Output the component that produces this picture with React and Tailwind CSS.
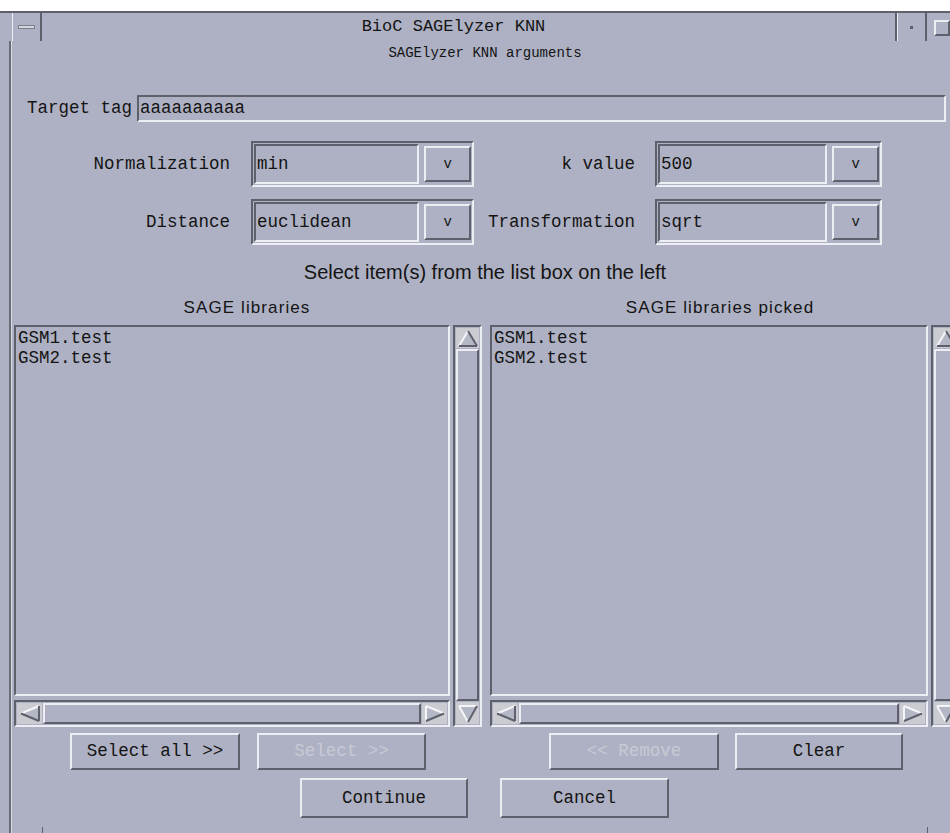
import React from "react";

const MONO = { fontFamily: '"Liberation Mono", "DejaVu Sans Mono", monospace' };
const SANS = { fontFamily: '"Liberation Sans", Arial, sans-serif' };

const raised =
  "border-2 border-t-[#eceef3] border-l-[#eceef3] border-r-[#5e616c] border-b-[#5e616c]";
const sunken =
  "border-2 border-t-[#5e616c] border-l-[#5e616c] border-r-[#eceef3] border-b-[#eceef3]";

function Arrow({ dir }) {
  const L = "#f4f5f8";
  const D = "#5e616c";
  const F = "#b4b7c6";
  if (dir === "up") {
    return (
      <svg width="22" height="19" viewBox="0 0 22 19" className="block">
        <polygon points="11,2 2,17 20,17" fill={F} />
        <line x1="11" y1="2" x2="2" y2="17" stroke={L} strokeWidth="2" />
        <line x1="11" y1="2" x2="20" y2="17" stroke={D} strokeWidth="2" />
        <line x1="2" y1="17" x2="20" y2="17" stroke={D} strokeWidth="2" />
      </svg>
    );
  }
  if (dir === "down") {
    return (
      <svg width="22" height="21" viewBox="0 0 22 21" className="block">
        <polygon points="2,3 20,3 11,19" fill={F} />
        <line x1="2" y1="3" x2="20" y2="3" stroke={L} strokeWidth="2" />
        <line x1="2" y1="3" x2="11" y2="19" stroke={L} strokeWidth="2" />
        <line x1="20" y1="3" x2="11" y2="19" stroke={D} strokeWidth="2" />
      </svg>
    );
  }
  if (dir === "left") {
    return (
      <svg width="24" height="21" viewBox="0 0 24 21" className="block">
        <polygon points="3,10.5 21,3 21,18" fill={F} />
        <line x1="3" y1="10.5" x2="21" y2="3" stroke={L} strokeWidth="2" />
        <line x1="3" y1="10.5" x2="21" y2="18" stroke={D} strokeWidth="2" />
        <line x1="21" y1="3" x2="21" y2="18" stroke={D} strokeWidth="2" />
      </svg>
    );
  }
  return (
    <svg width="24" height="21" viewBox="0 0 24 21" className="block">
      <polygon points="21,10.5 3,3 3,18" fill={F} />
      <line x1="3" y1="3" x2="3" y2="18" stroke={L} strokeWidth="2" />
      <line x1="3" y1="3" x2="21" y2="10.5" stroke={L} strokeWidth="2" />
      <line x1="3" y1="18" x2="21" y2="10.5" stroke={D} strokeWidth="2" />
    </svg>
  );
}

function VScroll() {
  return (
    <div className={`w-[29px] h-[402px] ${sunken} flex flex-col p-[1px] gap-[1px]`}>
      <div className="h-[20px] bg-[#cbccd1] flex items-center justify-center">
        <Arrow dir="up" />
      </div>
      <div className={`flex-1 ${raised}`} />
      <div className="h-[22px] bg-[#cbccd1] flex items-center justify-center">
        <Arrow dir="down" />
      </div>
    </div>
  );
}

function HScroll({ width }) {
  return (
    <div className={`${width} h-[27px] ${sunken} flex p-[1px] gap-[1px]`}>
      <div className="w-[25px] bg-[#cbccd1] flex items-center justify-center">
        <Arrow dir="left" />
      </div>
      <div className={`flex-1 ${raised}`} />
      <div className="w-[25px] bg-[#cbccd1] flex items-center justify-center">
        <Arrow dir="right" />
      </div>
    </div>
  );
}

function ListPanel({ items, listWidth }) {
  return (
    <div className="flex gap-[3px]">
      <div className="flex flex-col gap-[4px]">
        <div className={`${listWidth} h-[371px] ${sunken} pl-[2px] pt-[1px]`}>
          {items.map((it) => (
            <div key={it} className="h-[20px] leading-[20px] text-[17.5px]">
              {it}
            </div>
          ))}
        </div>
        <HScroll width={listWidth} />
      </div>
      <VScroll />
    </div>
  );
}

function Button({ children, width, disabled, height = "h-[37px]" }) {
  return (
    <div
      className={`${width} ${height} ${raised} flex items-center justify-center text-[17.5px] ${
        disabled ? "text-[#c7cad5]" : "text-[#141414]"
      }`}
    >
      {children}
    </div>
  );
}

function Combo({ value, width, fieldWidth }) {
  return (
    <div className={`${width} h-[46px] ${sunken} flex items-stretch p-[1px]`}>
      <div className={`${fieldWidth} ${sunken} flex items-center pl-[1px] text-[17.5px]`}>
        {value}
      </div>
      <div className={`ml-[5px] my-[2px] w-[47px] ${raised} flex items-center justify-center text-[14px]`}>
        v
      </div>
    </div>
  );
}

function FieldRow({ leftLabel, leftValue, rightLabel, rightValue, mt }) {
  return (
    <div className={`flex items-center h-[46px] ${mt}`}>
      <div className="w-[218px] text-right text-[17.5px]">{leftLabel}</div>
      <div className="ml-[21px]">
        <Combo value={leftValue} width="w-[223px]" fieldWidth="w-[167px]" />
      </div>
      <div className="w-[161px] text-right text-[17.5px]">{rightLabel}</div>
      <div className="ml-[20px]">
        <Combo value={rightValue} width="w-[227px]" fieldWidth="w-[170px]" />
      </div>
    </div>
  );
}

function TitleBar() {
  return (
    <div className="h-[30px] shrink-0 border-t-2 border-[#5e616c] flex items-stretch">
      <div className="w-[12px]" />
      <div className="w-[30px] border-l border-[#eceef3] border-r-2 border-r-[#5e616c] flex items-center pl-[5px]">
        <div className="w-[17px] h-[4px] bg-[#d5d7df] border border-[#7b7e8a]" />
      </div>
      <div className="flex-1 flex items-center justify-center pr-[30px] text-[17px]">
        BioC SAGElyzer KNN
      </div>
      <div className="w-[2px] bg-[#5e616c]" />
      <div className="w-[1px] bg-[#eceef3]" />
      <div className="w-[27px] flex items-center justify-center">
        <div className="w-[3px] h-[3px] bg-[#5e616c]" />
      </div>
      <div className="w-[2px] bg-[#5e616c]" />
      <div className="w-[7px]" />
      <div className="w-[16px] h-[16px] mt-[7px] border-2 border-t-[#eceef3] border-l-[#eceef3] border-r-[#5e616c] border-b-[#5e616c]" />
    </div>
  );
}

export default function App() {
  return (
    <div
      className="w-[950px] h-[833px] bg-[#aeb1c3] overflow-hidden flex flex-col text-[#141414] relative"
      style={MONO}
    >
      <div className="h-[11px] bg-white shrink-0" />
      <TitleBar />
      <div className="flex flex-1">
        <div className="w-[9px] shrink-0" />
        <div className="w-[2px] shrink-0 bg-[#6a6d78]" />
        <div className="w-[1px] shrink-0 bg-[#d8dae2]" />
        <div className="w-[946px] shrink-0 flex flex-col">
          <div className="h-[24px] flex items-center justify-center text-[14px]">
            SAGElyzer KNN arguments
          </div>

          <div className="mt-[30px] h-[27px] flex items-center">
            <div className="w-[125px] pl-[15px] text-[17.5px]">Target tag</div>
            <div className={`w-[809px] h-[27px] ${sunken} flex items-center pl-[1px] text-[17.5px]`}>
              aaaaaaaaaa
            </div>
          </div>

          <FieldRow
            mt="mt-[19px]"
            leftLabel="Normalization"
            leftValue="min"
            rightLabel="k value"
            rightValue="500"
          />
          <FieldRow
            mt="mt-[12px]"
            leftLabel="Distance"
            leftValue="euclidean"
            rightLabel="Transformation"
            rightValue="sqrt"
          />

          <div className="mt-[17px] h-[20px] flex items-center justify-center text-[20px]" style={SANS}>
            Select item(s) from the list box on the left
          </div>

          <div className="mt-[16px] h-[20px] flex" style={SANS}>
            <div className="w-[470px] text-center text-[17px] tracking-[1.1px] leading-[20px]">
              SAGE libraries
            </div>
            <div className="w-[476px] text-center text-[17px] tracking-[1.1px] leading-[20px]">
              SAGE libraries picked
            </div>
          </div>

          <div className="mt-[7px] flex">
            <div className="ml-[2px]">
              <ListPanel items={["GSM1.test", "GSM2.test"]} listWidth="w-[436px]" />
            </div>
            <div className="ml-[8px]">
              <ListPanel items={["GSM1.test", "GSM2.test"]} listWidth="w-[438px]" />
            </div>
          </div>

          <div className="mt-[6px] flex">
            <div className="ml-[58px]">
              <Button width="w-[170px]">Select all &gt;&gt;</Button>
            </div>
            <div className="ml-[17px]">
              <Button width="w-[169px]" disabled>
                Select &gt;&gt;
              </Button>
            </div>
            <div className="ml-[123px]">
              <Button width="w-[170px]" disabled>
                &lt;&lt; Remove
              </Button>
            </div>
            <div className="ml-[16px]">
              <Button width="w-[168px]">Clear</Button>
            </div>
          </div>

          <div className="mt-[8px] flex">
            <div className="ml-[288px]">
              <Button width="w-[168px]" height="h-[40px]">
                Continue
              </Button>
            </div>
            <div className="ml-[32px]">
              <Button width="w-[169px]" height="h-[40px]">
                Cancel
              </Button>
            </div>
          </div>
        </div>
      </div>
      {/* resize-corner ticks along the bottom edge of the window frame */}
      <div className="absolute left-[42px] bottom-0 w-[1px] h-[6px] bg-[#5e616c]" />
      <div className="absolute left-[927px] bottom-0 w-[1px] h-[6px] bg-[#5e616c]" />
    </div>
  );
}
